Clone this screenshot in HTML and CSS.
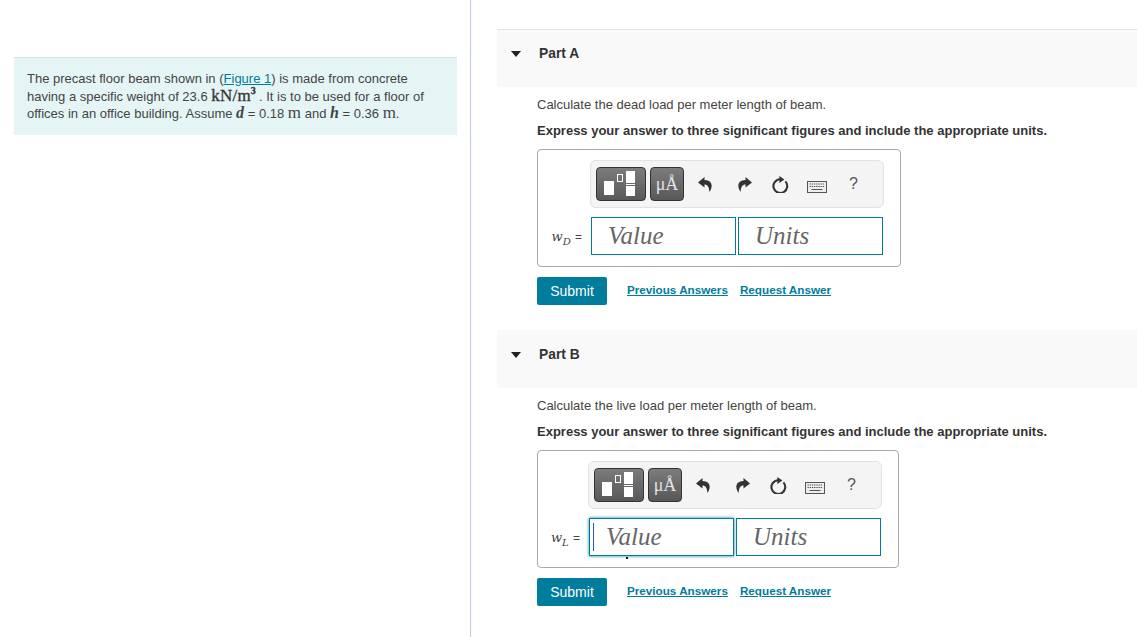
FILE: index.html
```html
<!DOCTYPE html>
<html lang="en">
<head>
    <meta charset="UTF-8">
    <title>Part A and Part B</title>
    <link rel="stylesheet" href="styles.css">
</head>
<body>
    <svg class="defs">
        <symbol id="icon-undo" viewBox="0 0 15 15"><path d="M6.5 0 L0 5.5 L6.5 10.5 V7.6 C9.6 7.6 11 9.8 11.4 15 C14.6 10.6 15.6 3.4 6.5 3 Z"/></symbol>
        <symbol id="icon-redo" viewBox="0 0 15 15"><path d="M8.5 0 L15 5.5 L8.5 10.5 V7.6 C5.4 7.6 4 9.8 3.6 15 C0.4 10.6 -0.6 3.4 8.5 3 Z"/></symbol>
        <symbol id="icon-reset" viewBox="0 0 17 17"><path d="M13.4 5.4 A6.9 6.9 0 1 1 8 3.2" fill="none" stroke="currentColor" stroke-width="2.1"/><path d="M7.4 0 L12.4 3.4 L7.4 7 Z"/></symbol>
        <symbol id="icon-keyboard" viewBox="0 0 20 12"><rect x="0.5" y="0.5" width="19" height="11" fill="#eee" stroke="#555"/><path d="M2.5 3h15M2.5 5.5h15" stroke="#555" stroke-dasharray="1.4 .8" fill="none"/><path d="M4.5 8.5h11" stroke="#555" fill="none"/></symbol>
    </svg>

    <div class="left-pane">
        <div class="intro">
            The precast floor beam shown in (<a href="#">Figure 1</a>) is made from concrete
            having a specific weight of 23.6 <span class="math-bold">kN/m<sup>3</sup></span>. It is to be used for a floor of
            offices in an office building. Assume <i class="math-var">d</i> = 0.18 <span class="math">m</span> and <i class="math-var">h</i> = 0.36 <span class="math">m</span>.
        </div>
    </div>

    <div class="right-pane">
        <section class="part part-a">
            <div class="part-head"><span class="caret"></span><span class="part-title">Part A</span></div>
            <div class="part-body">
                <p class="prompt">Calculate the dead load per meter length of beam.</p>
                <p class="instruction">Express your answer to three significant figures and include the appropriate units.</p>
                <div class="answer-box">
                    <div class="toolbar">
                        <button class="tool tool-frac">
                            <span class="frac-big"></span><span class="frac-small"></span>
                            <span class="frac-stack"><span class="frac-top"></span><span class="frac-line"></span><span class="frac-bottom"></span></span>
                        </button>
                        <button class="tool tool-unit">μÅ</button>
                        <svg class="ic ic-undo"><use href="#icon-undo"/></svg>
                        <svg class="ic ic-redo"><use href="#icon-redo"/></svg>
                        <svg class="ic ic-reset"><use href="#icon-reset"/></svg>
                        <svg class="ic ic-keyboard"><use href="#icon-keyboard"/></svg>
                        <span class="help">?</span>
                    </div>
                    <div class="input-row">
                        <span class="var-label"><i>w<sub>D</sub></i> =</span>
                        <div class="field">Value</div>
                        <div class="field">Units</div>
                    </div>
                </div>
                <div class="actions">
                    <button class="submit">Submit</button>
                    <a class="action-link" href="#">Previous Answers</a>
                    <a class="action-link" href="#">Request Answer</a>
                </div>
            </div>
        </section>

        <section class="part part-b">
            <div class="part-head"><span class="caret"></span><span class="part-title">Part B</span></div>
            <div class="part-body">
                <p class="prompt">Calculate the live load per meter length of beam.</p>
                <p class="instruction">Express your answer to three significant figures and include the appropriate units.</p>
                <div class="answer-box">
                    <div class="toolbar">
                        <button class="tool tool-frac">
                            <span class="frac-big"></span><span class="frac-small"></span>
                            <span class="frac-stack"><span class="frac-top"></span><span class="frac-line"></span><span class="frac-bottom"></span></span>
                        </button>
                        <button class="tool tool-unit">μÅ</button>
                        <svg class="ic ic-undo"><use href="#icon-undo"/></svg>
                        <svg class="ic ic-redo"><use href="#icon-redo"/></svg>
                        <svg class="ic ic-reset"><use href="#icon-reset"/></svg>
                        <svg class="ic ic-keyboard"><use href="#icon-keyboard"/></svg>
                        <span class="help">?</span>
                    </div>
                    <div class="input-row">
                        <span class="var-label"><i>w<sub>L</sub></i> =</span>
                        <div class="field field-focus">Value<span class="cursor"></span><span class="stray-dot"></span></div>
                        <div class="field">Units</div>
                    </div>
                </div>
                <div class="actions">
                    <button class="submit">Submit</button>
                    <a class="action-link" href="#">Previous Answers</a>
                    <a class="action-link" href="#">Request Answer</a>
                </div>
            </div>
        </section>
    </div>
</body>
</html>
```
FILE: styles.css
```css
* {
    box-sizing: border-box;
}
html, body {
    height: 100%;
}
body {
    margin: 0;
    display: flex;
    overflow: hidden;
    font-family: "Liberation Sans", Arial, sans-serif;
    font-size: 13px;
    color: #333;
    background: #fff;
}
.defs {
    display: none;
}
a {
    color: #007c9c;
}

/* left column */
.left-pane {
    width: 471px;
    flex: none;
    padding: 57px 13px 0 14px;
    border-right: 1px solid #bccfde;
}
.intro {
    height: 78px;
    padding: 12px 25px 0 13px;
    background: #e5f5f6;
    border-top: 1px solid #d5e0e6;
    font-size: 13px;
    line-height: 17.5px;
    color: #444;
}
.math, .math-bold, .math-var {
    font-family: "Liberation Serif", serif;
    font-size: 17px;
    line-height: 0;
}
.math-bold {
    font-size: 17px;
    letter-spacing: 0.2px;
    color: #333;
    -webkit-text-stroke: 0.3px #333;
}
.math-bold sup {
    margin-right: 3px;
    font-size: 10px;
    font-weight: bold;
    line-height: 0;
}
.math-var {
    font-size: 16px;
    font-weight: bold;
}

/* right column */
.right-pane {
    flex: 1;
    padding: 29px 0 0 26px;
    min-width: 0;
}
.part-b {
    margin-top: 25px;
}
.part-head {
    height: 58px;
    display: flex;
    align-items: flex-start;
    padding: 16px 0 0 14px;
    background: #f9f9f9;
    border-top: 1px solid #e2e2e2;
}
.part-b .part-head {
    border-top-color: #f9f9f9;
}
.caret {
    width: 0;
    height: 0;
    margin-top: 5px;
    border-left: 5.5px solid transparent;
    border-right: 5.5px solid transparent;
    border-top: 6px solid #222;
}
.part-title {
    margin-left: 18px;
    font-weight: bold;
    font-size: 13.8px;
    line-height: 15px;
}
.part-body {
    padding: 10px 0 0 40px;
}
.prompt, .instruction {
    margin: 0;
    font-size: 13px;
    line-height: 15px;
    color: #444;
}
.instruction {
    margin-top: 11px;
    font-weight: bold;
    color: #333;
}
.answer-box {
    width: 364px;
    height: 118px;
    margin-top: 11px;
    padding: 10px 0 0 52px;
    border: 1px solid #aaa;
    border-radius: 4px;
}
.part-b .answer-box {
    width: 362px;
    padding-left: 50px;
}
.toolbar {
    width: 294px;
    height: 48px;
    display: flex;
    align-items: center;
    padding-left: 5px;
    background: #f4f4f4;
    border: 1px solid #e2e2e2;
    border-radius: 6px;
}
.tool {
    height: 34px;
    padding: 0;
    border: 1px solid #333;
    border-radius: 4px;
    background: linear-gradient(#7c7c7c, #58585a);
    color: #eee;
}
.tool-frac {
    width: 50px;
    flex: none;
    display: flex;
    align-items: flex-end;
    padding: 3px 0 4px 7px;
}
.frac-big {
    width: 10px;
    height: 14px;
    margin-bottom: 1px;
    background: #fff;
}
.frac-small {
    width: 6px;
    height: 8px;
    margin: 0 0 14px 3px;
    border: 1px solid #fff;
}
.frac-stack {
    width: 9px;
    margin-left: 3px;
    display: flex;
    flex-direction: column;
    align-self: stretch;
}
.frac-top {
    height: 12px;
    background: #fff;
}
.frac-line {
    height: 1px;
    margin: 1px 0 1px;
    background: #fff;
}
.frac-bottom {
    height: 10px;
    background: #fff;
}
.tool-unit {
    width: 34px;
    flex: none;
    margin-left: 4px;
    font-family: "Liberation Serif", serif;
    font-size: 18px;
    line-height: 30px;
    color: #e4e4e4;
}
.ic {
    flex: none;
    fill: #333;
    color: #333;
}
.ic-undo, .ic-redo {
    width: 15px;
    height: 15px;
}
.ic-undo {
    margin-left: 14px;
}
.ic-redo {
    margin-left: 24px;
}
.ic-reset {
    width: 17px;
    height: 17px;
    margin-left: 20px;
}
.ic-keyboard {
    width: 20px;
    height: 12px;
    margin-left: 18px;
    margin-top: 5px;
}
.help {
    margin-left: 22px;
    font-size: 16px;
    color: #555;
}
.input-row {
    display: flex;
    align-items: center;
    margin-top: 9px;
    margin-left: 1px;
}
.var-label {
    width: 42px;
    margin-left: -42px;
    flex: none;
    padding-right: 9px;
    text-align: right;
    white-space: nowrap;
    font-size: 12px;
    color: #444;
}
.var-label i {
    margin-right: 1px;
    font-family: "DejaVu Serif", serif;
    font-size: 13px;
}
.var-label sub {
    font-size: 10px;
    line-height: 0;
}
.field {
    position: relative;
    width: 145px;
    height: 38px;
    margin-right: 2px;
    padding-left: 16px;
    border: 1px solid #007c9c;
    font-family: "Liberation Serif", serif;
    font-style: italic;
    font-size: 25px;
    line-height: 35px;
    color: #666;
}
.field-focus {
    border-width: 1.5px;
    box-shadow: 0 0 3px #007c9c;
}
.cursor {
    position: absolute;
    left: 3px;
    top: 4px;
    width: 1px;
    height: 28px;
    background: #3355bb;
}
.stray-dot {
    position: absolute;
    left: 36px;
    top: 38px;
    width: 2px;
    height: 2px;
    background: #111;
}
.actions {
    display: flex;
    align-items: center;
    margin-top: 10px;
}
.submit {
    width: 70px;
    height: 28px;
    padding: 0;
    background: #007c9c;
    border: none;
    border-radius: 2px;
    font-family: "Liberation Sans", Arial, sans-serif;
    font-size: 14px;
    color: #fff;
}
.action-link {
    margin-left: 20px;
    margin-top: -3px;
    font-size: 11.7px;
    font-weight: bold;
}
.action-link + .action-link {
    margin-left: 12px;
}
```
